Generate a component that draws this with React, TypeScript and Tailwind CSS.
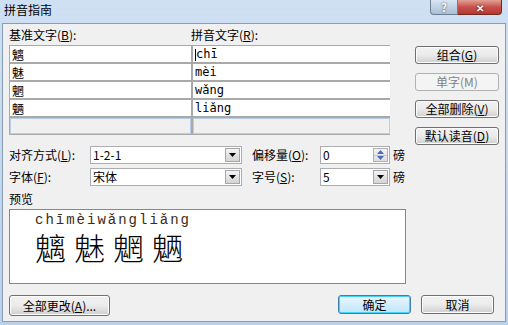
const font = { fontFamily: '"Noto Sans CJK SC", "Liberation Sans", sans-serif' };

const rows = [
  { base: "魑", pinyin: "chī" },
  { base: "魅", pinyin: "mèi" },
  { base: "魍", pinyin: "wǎng" },
  { base: "魉", pinyin: "liǎng" },
];

function Btn({ children, disabled, primary }: { children: React.ReactNode; disabled?: boolean; primary?: boolean }) {
  const base = "flex items-center justify-center rounded-[3px] border text-[12px] leading-none";
  if (disabled)
    return <div className={`${base} border-[#adb2b5] bg-[#f4f4f4] text-[#838383]`}>{children}</div>;
  if (primary)
    return (
      <div className={`${base} border-[#3c7fb1] bg-gradient-to-b from-[#eaf6fd] to-[#bee6fd] text-black shadow-[inset_0_0_0_1px_#48d0f6]`}>
        {children}
      </div>
    );
  return (
    <div className={`${base} border-[#707070] bg-gradient-to-b from-[#f2f2f2] via-[#ebebeb] to-[#cfcfcf] text-black shadow-[inset_0_0_0_1px_#fcfcfc]`}>
      {children}
    </div>
  );
}

function Tri({ up, color }: { up?: boolean; color: string }) {
  return (
    <svg width="7" height="4" viewBox="0 0 7 4">
      <path d={up ? "M0 4 L3.5 0 L7 4 Z" : "M0 0 L7 0 L3.5 4 Z"} fill={color} />
    </svg>
  );
}

function Combo({ value, w }: { value: string; w: string }) {
  return (
    <div className={`${w} flex h-[18px] items-center border border-[#abadb3] bg-white`}>
      <span className="flex-1 pl-[2px] text-[12px] leading-none">{value}</span>
      <div className="m-[1px] flex h-[14px] w-[15px] items-center justify-center border border-[#a6a6a6] bg-gradient-to-b from-[#f4f4f4] to-[#d4d4d4]">
        <Tri color="#000" />
      </div>
    </div>
  );
}

export default function App() {
  return (
    <div className="flex h-[325px] w-[508px] flex-col overflow-hidden bg-gradient-to-b from-[#cfe0f3] to-[#b9d1ea] text-black" style={font}>
      {/* Title bar */}
      <div className="flex h-[23px] shrink-0 items-start">
        <span className="ml-[4px] mt-[4px] text-[12px] leading-none text-black">拼音指南</span>
        <div className="ml-auto mr-[6px] flex">
          <div className="flex h-[15px] w-[28px] items-center justify-center rounded-bl-[4px] border border-t-0 border-[#6d7d92] bg-gradient-to-b from-[#d9e6f4] to-[#a9bfd6] text-[11px] font-bold leading-[13px] text-white [text-shadow:0_0_2px_#333]">
            ?
          </div>
          <div className="flex h-[15px] w-[44px] items-center justify-center rounded-br-[4px] border border-l-0 border-t-0 border-[#6d2a22] bg-gradient-to-b from-[#e0a194] via-[#c75050] to-[#b5382a] text-[10px] font-bold leading-[13px] text-white [text-shadow:0_0_2px_#400]">
            ✕
          </div>
        </div>
      </div>

      {/* Client area */}
      <div className="mx-[2px] mb-[3px] flex flex-1 flex-col border border-[#8a9cb4] bg-[#f0f0f0] px-[6px] pt-[4px]">
        <div className="flex">
          <div className="w-[381px]">
            <div className="flex h-[17px] text-[12px] leading-[14px]">
              <span className="w-[182px]">基准文字(<u>B</u>):</span>
              <span>拼音文字(<u>R</u>):</span>
            </div>
            <div className="grid grid-cols-[181px_197px] gap-x-[2px] gap-y-[2px] bg-[#a9a9a9] p-[1px]">
              {rows.map((r, i) => (
                <>
                  <div key={`b${i}`} className="h-[16px] overflow-hidden bg-white pl-[2px] text-[12px] leading-[17px]">{r.base}</div>
                  <div key={`p${i}`} className="h-[16px] overflow-hidden bg-white pl-[2px] text-[12px] leading-[16px]" style={{ fontFamily: '"DejaVu Sans Mono", monospace' }}>
                    {i === 0 && <span className="inline-block h-[12px] w-[1px] bg-black align-middle" />}
                    {r.pinyin}
                  </div>
                </>
              ))}
              <div className="h-[16px] border border-[#b7cfe8] bg-[#f0f0f0]" />
              <div className="h-[16px] border border-[#b7cfe8] bg-[#f0f0f0]" />
            </div>
          </div>
          <div className="ml-[25px] mt-[18px] flex w-[84px] flex-col gap-[9px] [&>div]:h-[18px]">
            <Btn>组合(<u>G</u>)</Btn>
            <Btn disabled>单字(M)</Btn>
            <Btn>全部删除(<u>V</u>)</Btn>
            <Btn>默认读音(<u>D</u>)</Btn>
          </div>
        </div>

        {/* Options */}
        <div className="mt-[1px] flex items-center text-[12px] leading-none">
          <span className="w-[81px]">对齐方式(<u>L</u>):</span>
          <Combo value="1-2-1" w="w-[152px]" />
          <span className="ml-[10px] w-[68px]">偏移量(<u>O</u>):</span>
          <div className="flex h-[18px] w-[70px] items-center border border-[#abadb3] bg-white">
            <span className="flex-1 pl-[2px]">0</span>
            <div className="m-[1px] flex h-[14px] w-[15px] flex-col border border-[#b0b0b0] bg-gradient-to-b from-[#f4f4f4] to-[#dedede]">
              <div className="flex flex-1 items-center justify-center border-b border-[#c8c8c8]">
                <Tri up color="#4a6db5" />
              </div>
              <div className="flex flex-1 items-center justify-center">
                <Tri color="#4a6db5" />
              </div>
            </div>
          </div>
          <span className="ml-[3px]">磅</span>
        </div>
        <div className="mt-[4px] flex items-center text-[12px] leading-none">
          <span className="w-[81px]">字体(<u>F</u>):</span>
          <Combo value="宋体" w="w-[152px]" />
          <span className="ml-[10px] w-[68px]">字号(<u>S</u>):</span>
          <Combo value="5" w="w-[70px]" />
          <span className="ml-[3px]">磅</span>
        </div>

        {/* Preview */}
        <div className="mt-[6px] text-[12px] leading-[14px]">预览</div>
        <div className="mt-[3px] h-[75px] w-[397px] border border-[#828790] bg-white pl-[25px] pt-[2px]">
          <div className="text-[14px] leading-[16px] tracking-[2px] text-[#3d2b12]" style={{ fontFamily: '"Liberation Mono", monospace' }}>
            chīmèiwǎngliǎng
          </div>
          <div className="flex gap-[8px] text-[31px] leading-[38px]" style={{ fontFamily: '"Noto Sans CJK SC", serif', fontWeight: 300 }}>
            <span>魑</span>
            <span>魅</span>
            <span>魍</span>
            <span>魉</span>
          </div>
        </div>

        {/* Bottom buttons */}
        <div className="mt-[11px] flex [&>div]:h-[19px]">
          <div className="w-[101px]">
            <Btn>
              <span className="flex h-[19px] w-[101px] items-center justify-center">全部更改(<u>A</u>)...</span>
            </Btn>
          </div>
          <div className="ml-auto flex gap-[10px] [&>div]:h-[19px] [&>div]:w-[73px]">
            <Btn primary>确定</Btn>
            <Btn>取消</Btn>
          </div>
          <div className="w-[5px]" />
        </div>
      </div>
    </div>
  );
}
